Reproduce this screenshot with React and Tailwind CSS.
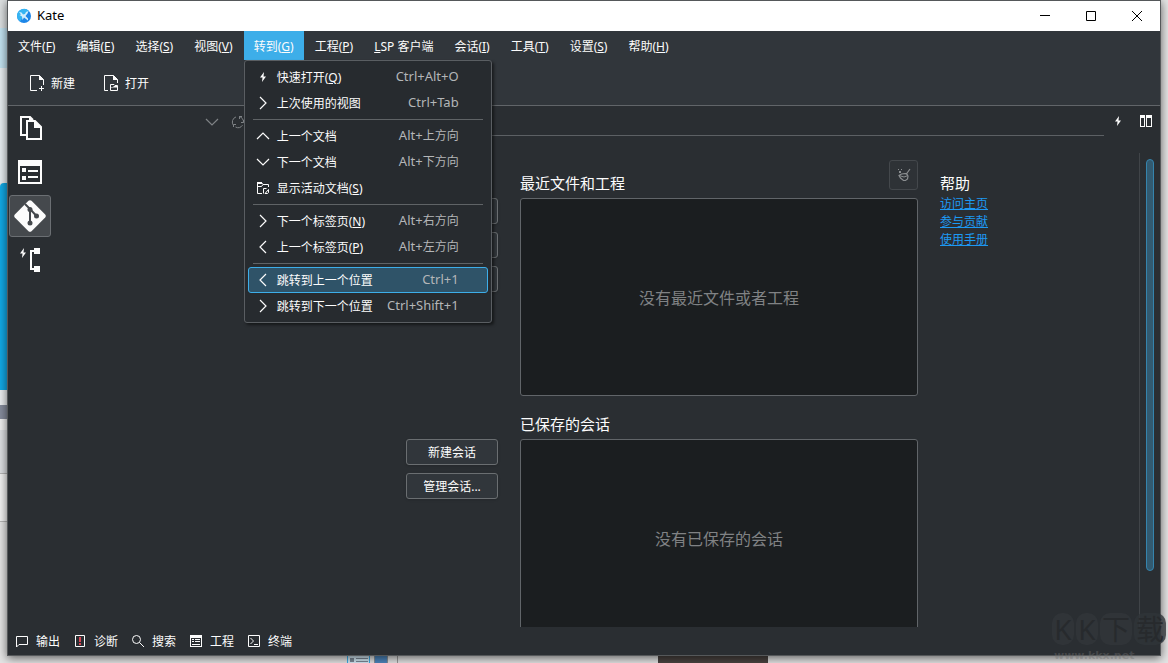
import React from 'react';

const menus = [
  { label: '文件', mnemonic: 'F' },
  { label: '编辑', mnemonic: 'E' },
  { label: '选择', mnemonic: 'S' },
  { label: '视图', mnemonic: 'V' },
  { label: '转到', mnemonic: 'G', open: true },
  { label: '工程', mnemonic: 'P' },
  { label: 'LSP 客户端' },
  { label: '会话', mnemonic: 'I' },
  { label: '工具', mnemonic: 'T' },
  { label: '设置', mnemonic: 'S' },
  { label: '帮助', mnemonic: 'H' },
];

const goGroups = [
  [
    { icon: 'bolt', label: '快速打开', mnemonic: 'Q', keys: 'Ctrl+Alt+O' },
    { icon: 'right', label: '上次使用的视图', keys: 'Ctrl+Tab' },
  ],
  [
    { icon: 'up', label: '上一个文档', keys: 'Alt+', direction: '上方向' },
    { icon: 'down', label: '下一个文档', keys: 'Alt+', direction: '下方向' },
    { icon: 'folder', label: '显示活动文档', mnemonic: 'S' },
  ],
  [
    { icon: 'right', label: '下一个标签页', mnemonic: 'N', keys: 'Alt+', direction: '右方向' },
    { icon: 'left', label: '上一个标签页', mnemonic: 'P', keys: 'Alt+', direction: '左方向' },
  ],
  [
    { icon: 'left', label: '跳转到上一个位置', keys: 'Ctrl+1', active: true },
    { icon: 'right', label: '跳转到下一个位置', keys: 'Ctrl+Shift+1' },
  ],
];

const toolViews = [
  { icon: 'output', label: '输出' },
  { icon: 'diagnostics', label: '诊断' },
  { icon: 'search', label: '搜索' },
  { icon: 'project', label: '工程' },
  { icon: 'terminal', label: '终端' },
];

const stroke = { fill: 'none', stroke: 'currentColor' };

// 16px icons, drawn on the pixel grid
const icons = {
  bolt: <path d="M9 3 5 8.500h2.500L7 13l4-5.500H8.500Z" fill="currentColor" />,
  right: <path d="m5 2 6 6-6 6" strokeWidth="1.200" {...stroke} />,
  left: <path d="m11 2-6 6 6 6" strokeWidth="1.200" {...stroke} />,
  up: <path d="m2 11 6-6 6 6" strokeWidth="1.200" {...stroke} />,
  down: <path d="m2 5 6 6 6-6" strokeWidth="1.200" {...stroke} />,
  folder: (
    <g {...stroke}>
      <path d="M7 13.500H2.500v-11h4l1.500 2h5.500V7M2.500 6.500h4l1.500-2" />
      <path d="M2 2h5v2H2z" fill="currentColor" stroke="none" />
      <path d="M8.500 13.500v-5h3M10 13.500l3.500-4v3l-1 1Z" />
    </g>
  ),
  newDoc: (
    <g {...stroke}>
      <path d="M8 15.500H1.500V.5h9l4 4V10M12.500 11v5M10 13.500h5" />
      <path d="M10 0v5h5Z" fill="currentColor" stroke="none" />
    </g>
  ),
  openDoc: (
    <g {...stroke}>
      <path d="M5 15.500H1.500V.5h9l4 4V8" />
      <path d="M10 0v5h5Z" fill="currentColor" stroke="none" />
      <path d="M7.500 15.500v-6H11l1 1h2.500v5Z" />
      <path d="M7 12h3l1-1h4v1.500H7Z" fill="currentColor" stroke="none" />
    </g>
  ),
  refresh: (
    <g {...stroke}>
      <path d="M3.500 11.500A5.500 5.500 0 0 1 6 2.900M9 2.500a5.500 5.500 0 0 1 4.500 6M12.500 11.200A5.500 5.500 0 0 1 5.500 13" />
      <path d="M9.500 5V2.500H12M11 8.500h2.500V6M6 10.500H3.500V13" />
    </g>
  ),
  split: (
    <path d="M2 2h5v12H2Zm1 3v8h3V5Zm5-3h6v12H8Zm1 3v8h4V5Z" fill="currentColor" fillRule="evenodd" />
  ),
  broom: (
    <g {...stroke}>
      <path d="m14 2-4 5.500M3 8.500 5.500 7l5-.500 1.500 2.500-.500 3-2 1.500H7.500L4.500 11Z" strokeWidth="1.200" />
      <path d="M3 8.500 8 10l4-1.500" />
      <path d="M2 2h1v1H2zM5 2h1v1H5zM3 4h2v2H3z" fill="currentColor" stroke="none" />
    </g>
  ),
  output: <path d="M2.500 3.500h11v8H5L2.500 14Z" {...stroke} />,
  diagnostics: (
    <g>
      <path d="M3.500 2.500h9v11h-9Z" {...stroke} />
      <path d="M7 4h2v5H7zM7 10h2v2H7z" fill="#da4453" />
    </g>
  ),
  search: (
    <g {...stroke}>
      <circle cx="6.500" cy="6.500" r="4" />
      <path d="m9.500 9.500 4.500 4.500" />
    </g>
  ),
  project: (
    <path d="M2 2h12v12H2Zm1 3v8h10V5ZM4 6h2v1H4zm3 0h5v1H7zM4 8h2v1H4zm3 0h5v1H7zM4 11h8v1H4z" fill="currentColor" fillRule="evenodd" />
  ),
  terminal: (
    <g {...stroke}>
      <path d="M2.500 2.500h11v11h-11Z" />
      <path d="m4.500 5 3 3-3 3M8 11.500h4" />
    </g>
  ),
};

function Icon({ name, className = '' }) {
  return (
    <svg viewBox="0 0 16 16" className={`size-4 shrink-0 ${className}`} aria-hidden="true">
      {icons[name]}
    </svg>
  );
}

function Mnemonic({ children }) {
  if (!children) return null;
  return (
    <>
      (<u>{children}</u>)
    </>
  );
}

function KateLogo() {
  return (
    <svg viewBox="0 0 16 16" className="size-4" aria-hidden="true">
      <circle cx="8" cy="8" r="7" fill="#1d86e8" />
      <path d="M1 8a7 7 0 0 1 12-5L8 8l-4 5.500A7 7 0 0 1 1 8Z" fill="#35b4f2" />
      <path d="m3 4 2.500.5L7 6.500l2-.5 1-2 2.500-1-1 2.500L9.500 8l2.500 2.500v2L8 9.500 6.500 12l-.5-3.500L3.500 7l1.500-.500Z" fill="#d3eefc" />
    </svg>
  );
}

function TitleBar() {
  return (
    <header className="flex h-[30px] shrink-0 items-center bg-white text-black">
      <div className="flex flex-1 items-center gap-[5px] pl-2 text-[13px]">
        <KateLogo />
        <span>Kate</span>
      </div>
      <button aria-label="最小化" className="flex h-full w-[46px] items-center justify-center">
        <svg viewBox="0 0 10 10" className="size-[10px]"><path d="M0 4.500h10" stroke="#000" /></svg>
      </button>
      <button aria-label="最大化" className="flex h-full w-[46px] items-center justify-center">
        <svg viewBox="0 0 10 10" className="size-[10px]"><path d="M.5.5h9v9h-9Z" fill="none" stroke="#000" /></svg>
      </button>
      <button aria-label="关闭" className="flex h-full w-[46px] items-center justify-center">
        <svg viewBox="0 0 10 10" className="size-[10px]"><path d="m0 0 10 10M10 0 0 10" stroke="#000" /></svg>
      </button>
    </header>
  );
}

function GoMenu() {
  return (
    <div role="menu" className="absolute top-full left-0 z-20 w-[248px] rounded-[3px] border border-[#5a5e62] bg-[#272b2f] p-[3px] shadow-[2px_2px_3px_rgba(0,0,0,0.5)]">
      {goGroups.map((group, i) => (
        <React.Fragment key={i}>
          {i > 0 && <hr className="mx-[5px] my-[3px] border-[#5f6366]" />}
          {group.map((item) => (
            <button
              key={item.label}
              role="menuitem"
              className={`flex h-[26px] w-full items-center rounded-[3px] border pr-7 pl-1.5 whitespace-nowrap ${
                item.active ? 'border-[#3daee9] bg-[#2f5368]' : 'border-transparent'
              }`}
            >
              <Icon name={item.icon} />
              <span className="pt-0.5 pl-1.5">
                {item.label}
                <Mnemonic>{item.mnemonic}</Mnemonic>
              </span>
              <span className="ml-auto text-[#b4b6b8]">
                <span className="text-[13px]">{item.keys}</span>
                {item.direction}
              </span>
            </button>
          ))}
        </React.Fragment>
      ))}
    </div>
  );
}

function MenuBar() {
  return (
    <nav className="flex h-[29px] shrink-0 gap-px bg-[#31363b]">
      {menus.map(({ label, mnemonic, open }) => (
        <div key={label} className="relative">
          <button className={`h-full px-[10px] pt-0.5 whitespace-nowrap ${open ? 'bg-[#3daee9]' : ''}`}>
            {mnemonic ? label : <><u>L</u>{label.slice(1)}</>}
            <Mnemonic>{mnemonic}</Mnemonic>
          </button>
          {open && <GoMenu />}
        </div>
      ))}
    </nav>
  );
}

function ToolBar() {
  return (
    <div className="flex h-[46px] shrink-0 items-center gap-7 border-b border-[#616569] bg-[#31363b] pl-[21px]">
      <button className="flex items-center gap-1.5">
        <Icon name="newDoc" />
        <span className="pt-0.5">新建</span>
      </button>
      <button className="flex items-center gap-1.5">
        <Icon name="openDoc" />
        <span className="pt-0.5">打开</span>
      </button>
    </div>
  );
}

function SideBar() {
  const button = 'flex size-[42px] items-center justify-center rounded-[3px] border';
  return (
    <aside className="flex shrink-0 flex-col gap-0.5 pt-px pl-px">
      <button aria-label="文档" className={`${button} border-transparent`}>
        <svg viewBox="0 0 24 24" className="size-6">
          <path d="M8 19H3V1h9l3 3" fill="none" stroke="#fcfcfc" strokeWidth="2" />
          <path d="M9 5h8l6 6v12H9Z" fill="none" stroke="#fcfcfc" strokeWidth="2" />
          <path d="M16 4v8h8ZM11 0l5 5h-5Z" fill="#fcfcfc" />
        </svg>
      </button>
      <button aria-label="工程" className={`${button} border-transparent`}>
        <svg viewBox="0 0 24 24" className="size-6">
          <path d="M0 0h24v24H0Zm2 6v16h20V6ZM4 8h4v4H4zm6 2h10v2H10zM4 16h4v4H4zm6 0h10v2H10z" fill="#fcfcfc" fillRule="evenodd" />
        </svg>
      </button>
      <button aria-label="Git" className={`${button} border-[#6b6f73] bg-[#45494d]`}>
        <svg viewBox="0 0 32 32" className="size-8">
          <path d="M14.500.8q1.500-1.200 3 0l13.700 13.700q1.200 1.500 0 3L17.500 31.200q-1.500 1.200-3 0L.8 17.500q-1.200-1.500 0-3Z" fill="#fcfcfc" />
          <path d="m11 4 5 5 6.500 7M16 9v14" fill="none" stroke="#45494d" strokeWidth="2" />
          <g fill="#45494d">
            <circle cx="16" cy="9.500" r="2.500" />
            <circle cx="22.500" cy="16" r="2.500" />
            <circle cx="16" cy="23" r="2.500" />
          </g>
        </svg>
      </button>
      <button aria-label="LSP" className={`${button} border-transparent`}>
        <svg viewBox="0 0 24 24" className="size-6">
          <path d="M18 3h-5v18h5" fill="none" stroke="#fcfcfc" strokeWidth="2" />
          <path d="M16 0h6v6h-6zM16 18h6v6h-6zM6 0 2 5.500h2.500L4 10l4-5.500H5.500Z" fill="#fcfcfc" />
        </svg>
      </button>
    </aside>
  );
}

function GitPanel() {
  return (
    <section className="flex w-[255px] shrink-0 justify-end pr-[55px]">
      <div className="flex h-8 text-[#7f8386]">
        <button aria-label="分支" className="flex w-[26px] items-center justify-center"><Icon name="down" /></button>
        <button aria-label="刷新" className="flex w-[26px] items-center justify-center"><Icon name="refresh" /></button>
      </div>
    </section>
  );
}

const actionButton = 'h-[26px] rounded-[3px] border border-[#6a6e71] bg-[#31363b] shadow-sm';

function FileActions() {
  return (
    <div className="flex flex-col gap-2 pt-[38px]">
      <button aria-label="新建文件" className={actionButton} />
      <button aria-label="打开文件" className={actionButton} />
      <button aria-label="打开文件夹" className={actionButton} />
    </div>
  );
}

function SessionActions() {
  return (
    <div className="flex flex-col gap-2 pt-[38px]">
      <button className={`${actionButton} pt-0.5`}>新建会话</button>
      <button className={`${actionButton} pt-0.5`}>管理会话...</button>
    </div>
  );
}

function RecentList({ title, empty, action }) {
  return (
    <section>
      <div className="flex h-[38px] items-end justify-between">
        <h2 className="pb-[3px] text-[15px] leading-6">{title}</h2>
        {action}
      </div>
      <div className="flex h-[198px] items-center justify-center rounded-[3px] border border-[#616569] bg-[#1b1e20] pt-0.5 text-base text-[#808284]">
        {empty}
      </div>
    </section>
  );
}

function WelcomePage() {
  const clearButton = (
    <button aria-label="清除" className="flex h-[30px] w-[29px] items-center justify-center self-start rounded-[3px] border border-[#44484c] bg-[#2e3236] text-[#8b8e90]">
      <Icon name="broom" />
    </button>
  );

  return (
    <div className="flex min-h-0 flex-1">
      <div className="grid min-w-0 flex-1 grid-cols-[92px_minmax(0,1fr)_179px] content-start gap-x-[22px] gap-y-[5px] overflow-hidden pt-6 pl-[100px] pr-5">
        <FileActions />
        <RecentList title="最近文件和工程" empty="没有最近文件或者工程" action={clearButton} />
        <section className="flex flex-col items-start text-[#1d99f3]">
          <h2 className="mt-[11px] text-[15px] leading-6 text-[#fcfcfc]">帮助</h2>
          <a href="#home" className="leading-[18px] underline">访问主页</a>
          <a href="#contribute" className="leading-[18px] underline">参与贡献</a>
          <a href="#handbook" className="leading-[18px] underline">使用手册</a>
        </section>
        <SessionActions />
        <RecentList title="已保存的会话" empty="没有已保存的会话" />
      </div>
      <div className="mt-[17px] w-[21px] shrink-0 border-l border-[#404448] px-1.5 pt-1.5">
        <div className="h-[88%] w-2 rounded-full border border-[#3584ad] bg-[#325a70]" />
      </div>
    </div>
  );
}

function EditorArea() {
  return (
    <main className="flex min-w-0 flex-1 flex-col">
      <div className="flex h-[30px] shrink-0">
        <div className="flex-1 border-b border-[#5c6064]" />
        <button aria-label="快速打开" className="flex w-7 items-center justify-center"><Icon name="bolt" /></button>
        <button aria-label="拆分视图" className="flex w-7 items-center justify-center"><Icon name="split" /></button>
      </div>
      <WelcomePage />
    </main>
  );
}

function StatusBar() {
  return (
    <footer className="flex h-7 shrink-0 items-center gap-3 pl-1.5">
      {toolViews.map(({ icon, label }) => (
        <button key={label} className="flex items-center gap-1.5">
          <Icon name={icon} />
          <span className="pt-0.5">{label}</span>
        </button>
      ))}
    </footer>
  );
}

// What shows of the desktop round the edges of the window
function Desktop() {
  return (
    <div className="absolute inset-0 flex flex-col justify-between bg-[#e4e4e4]" aria-hidden="true">
      <div className="flex w-2 flex-col">
        <div className="h-7 bg-[#dcdfe0]" />
        <div className="h-10 bg-[#c3e3f1]" />
        <div className="h-[115px] bg-[#e8eef1]" />
        <div className="h-[207px] rounded-tl bg-[#12a9e5]" />
        <div className="h-[15px] bg-[#eceef0]" />
        <div className="h-[14px] bg-[#858b9b]" />
        <div className="h-[11px] bg-[#f0f0f0]" />
        <div className="h-[43px] bg-[#dddfe2]" />
        <div className="h-[49px] border-y border-[#b5b5b5] bg-[#f2f2f2]" />
      </div>
      <div className="flex h-[7px]">
        <div className="ml-[347px] flex w-[23px] items-center justify-center gap-0.5 border-x border-[#3daee9] bg-[#d4e9f5]">
          <div className="h-1 w-1 bg-[#7c8b98]" />
          <div className="h-1 w-3 border-y border-[#7c8b98]" />
        </div>
        <div className="ml-1 w-[14px] border-x border-[#8a9299] bg-[#4d86bd]" />
        <div className="ml-[9px] w-px bg-[#9a9a9a]" />
        <div className="ml-[260px] w-[110px] bg-[#4a4340]" />
      </div>
    </div>
  );
}

function Watermark() {
  return (
    <div className="pointer-events-none absolute right-0 bottom-0 z-30 flex w-[116px] flex-col gap-1 whitespace-nowrap" aria-hidden="true">
      <div className="flex h-8 items-center gap-0.5 text-[28px] leading-8 text-[#272a2d]">
        <span className="w-[22px] rounded-[10px] bg-[#303438] text-center">K</span>
        <span className="w-[22px] rounded-[10px] bg-[#303438] text-center">K</span>
        <span className="w-8 rounded-[10px] bg-[#303438] text-center">下</span>
        <span className="w-8 rounded-[10px] bg-[#303438]/80 text-center">载</span>
      </div>
      <span className="pl-0.5 font-['DejaVu_Sans'] text-[11px] leading-[14px] font-bold text-[#707070]/40">www.kkx.net</span>
    </div>
  );
}

export default function App() {
  return (
    <div className="relative h-screen overflow-hidden px-[7px] pb-[7px] font-['Noto_Sans','Noto_Sans_CJK_SC',sans-serif] text-xs text-[#fcfcfc]">
      <Desktop />
      <div className="relative flex h-full flex-col border border-[#55585a] bg-[#2a2e32] shadow-[0_2px_9px_rgba(0,0,0,0.6)]">
        <TitleBar />
        <MenuBar />
        <ToolBar />
        <div className="flex min-h-0 flex-1">
          <SideBar />
          <GitPanel />
          <EditorArea />
        </div>
        <StatusBar />
      </div>
      <Watermark />
    </div>
  );
}
